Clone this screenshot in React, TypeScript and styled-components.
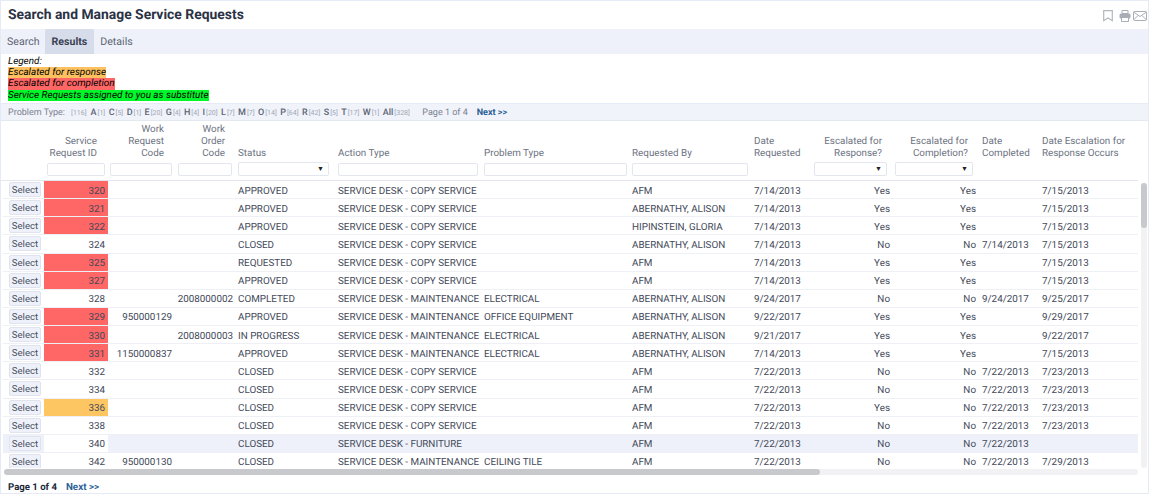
import React from "react";
import styled, { createGlobalStyle } from "styled-components";

const Global = createGlobalStyle`
  html, body { margin: 0; padding: 0; background: #fff; height: 496px; overflow: hidden; }
  body { font-family: Roboto, "Liberation Sans", sans-serif; font-size: 9.85px; color: #444a5a; text-rendering: geometricPrecision; }
  * { box-sizing: border-box; }
`;

const COLS = "1px 40px 64px 66px 62px 100px 146px 148px 122px 60px 81px 87px 60px 1fr";

const Page = styled.div`
  width: 1149px;
  height: 494px;
  border: 1px solid #e6eaf4;
  display: flex;
  flex-direction: column;
`;
const TitleBar = styled.div`
  flex: none;
  height: 28px;
  display: flex;
  align-items: center;
  justify-content: space-between;
  padding: 0 1px 0 7px;
`;
const Title = styled.h1`
  margin: 0;
  font-size: 13.9px;
  font-weight: 700;
  color: #2b3245;
`;
const Tools = styled.div`
  display: flex;
  align-items: center;
  gap: 2px;
  padding-top: 2px;
  & > svg:first-child {
    margin-right: 4px;
  }
`;
const Tabs = styled.div`
  flex: none;
  height: 25px;
  background: #eef1f9;
  display: flex;
`;
const Tab = styled.div<{ $active?: boolean }>`
  padding: ${(p) => (p.$active ? "0 7px" : "0 5px 0 6px")};
  line-height: 25px;
  font-size: 10.6px;
  border-radius: 2px 2px 0 0;
  background: ${(p) => (p.$active ? "#d6dcea" : "transparent")};
  font-weight: ${(p) => (p.$active ? 700 : 400)};
  color: ${(p) => (p.$active ? "#3a4152" : "#5c6373")};
`;
const Legend = styled.div`
  flex: none;
  height: 49px;
  padding: 2px 0 0 7px;
  display: flex;
  flex-direction: column;
  align-items: flex-start;
  font-style: italic;
  font-size: 9.9px;
  line-height: 11.2px;
  color: #000;
`;
const Mark = styled.span<{ $c?: string }>`
  background: ${(p) => p.$c || "transparent"};
`;
const FilterBar = styled.div`
  flex: none;
  height: 18px;
  background: #f0f3fa;
  border-top: 1px solid #e6eaf4;
  border-bottom: 1px solid #e4e8f1;
  display: flex;
  align-items: center;
  padding: 1px 0 0 7px;
  font-size: 9px;
  color: #7b8190;
  white-space: nowrap;
`;
const FilterLabel = styled.span`
  margin-right: 6px;
`;
const Letter = styled.span`
  margin-right: 3.45px;
  font-weight: 500;
  color: #5d6474;
  & > small {
    font-size: 7px;
    font-weight: 400;
    color: #a0a6b3;
    margin-left: 1px;
  }
`;
const Count = styled.small`
  font-size: 7px;
  color: #a0a6b3;
  margin-right: 4px;
`;
const PageInfo = styled.span`
  margin-left: 9px;
  margin-right: 9px;
`;
const NextLink = styled.a<{ $large?: boolean }>`
  color: #2b5f95;
  font-weight: 700;
  font-size: ${(p) => (p.$large ? "9.8px" : "9px")};
`;
const HeadRow = styled.div`
  flex: none;
  display: grid;
  grid-template-columns: ${COLS};
  height: 60px;
  padding-left: 2px;
  border-bottom: 1px solid #e3e6ee;
  width: 1137px;
  color: #6d7382;
  line-height: 12px;
`;
const Head = styled.div<{ $right?: boolean; $pr: number }>`
  display: flex;
  flex-direction: column;
  align-items: ${(p) => (p.$right ? "flex-end" : "flex-start")};
  text-align: ${(p) => (p.$right ? "right" : "left")};
  padding: 0 ${(p) => p.$pr}px 4px 2px;
  min-width: 0;
`;
const HeadLabel = styled.div`
  flex: 1;
  display: flex;
  align-items: flex-end;
  white-space: pre-line;
`;
const FieldBox = styled.div<{ $select?: boolean; $l: number; $r: number; $pr: number }>`
  margin: ${(p) => (p.$select ? 2 : 3)}px ${(p) => p.$r - p.$pr}px 0 ${(p) => p.$l - 2}px;
  align-self: stretch;
  flex: none;
  height: ${(p) => (p.$select ? 14 : 13)}px;
  width: auto;
  border: 1px solid #e3e6ee;
  border-radius: 2px;
  background: #fff;
  font-size: 7px;
  line-height: 12px;
  color: #222;
  text-align: right;
  padding-right: 4px;
`;
const Spacer = styled.div`
  flex: none;
  height: 13px;
  margin-top: 3px;
`;
const Scroller = styled.div`
  flex: none;
  position: relative;
  height: 294px;
  overflow: hidden;
`;
const RowsClip = styled.div`
  height: 287px;
  overflow: hidden;
`;
const Row = styled.div`
  display: grid;
  grid-template-columns: ${COLS};
  width: 1137px;
  height: 18.13px;
  padding-left: 2px;
  white-space: nowrap;
`;
const Cell = styled.div<{ $right?: number; $bg?: string }>`
  padding: 5.5px ${(p) => p.$right ?? 0}px 0 2px;
  line-height: 10px;
  text-align: ${(p) => (p.$right ? "right" : "left")};
  background: ${(p) => p.$bg || "transparent"};
  border-bottom: 1px solid #eef0f5;
  min-width: 0;
  height: 18.13px;
`;
const ButtonCell = styled.div<{ $bg?: string }>`
  background: ${(p) => p.$bg || "transparent"};
  border-bottom: 1px solid #eef0f5;
  height: 18.13px;
`;
const SelectBtn = styled.button`
  display: block;
  margin: 1px 0 0 5px;
  width: 32px;
  height: 15px;
  padding: 0;
  border: 1px solid #dfe3ee;
  border-radius: 2px;
  background: #eef1f9;
  color: #4a5162;
  font: 400 9.6px Roboto, sans-serif;
`;
const HScroll = styled.div`
  position: absolute;
  left: 3px;
  width: 1134px;
  top: 288px;
  height: 6px;
  background: #f2f2f4;
  border-radius: 3px;
`;
const HThumb = styled.div`
  width: 816px;
  height: 6px;
  border-radius: 3px;
  background: #c8c9cd;
`;
const VScroll = styled.div`
  position: absolute;
  left: 1140px;
  top: 2px;
  height: 285px;
  width: 6px;
  background: #f2f2f4;
  border-radius: 3px;
`;
const VThumb = styled.div`
  width: 6px;
  height: 45px;
  border-radius: 3px;
  background: #c8c9cd;
`;
const Footer = styled.div`
  flex: none;
  height: 18px;
  display: flex;
  align-items: center;
  padding: 6px 0 0 7px;
  font-size: 9.6px;
  font-weight: 700;
  color: #20283a;
  gap: 9px;
`;

type R = [string, string, string, string, string, string, string, string, string, string, string, string, string];

const COPY = "SERVICE DESK - COPY SERVICE";
const MAINT = "SERVICE DESK - MAINTENANCE";
const AB = "ABERNATHY, ALISON";

const rows: R[] = [
  ["320", "", "", "APPROVED", COPY, "", "AFM", "7/14/2013", "Yes", "Yes", "", "7/15/2013", "r"],
  ["321", "", "", "APPROVED", COPY, "", AB, "7/14/2013", "Yes", "Yes", "", "7/15/2013", "r"],
  ["322", "", "", "APPROVED", COPY, "", "HIPINSTEIN, GLORIA", "7/14/2013", "Yes", "Yes", "", "7/15/2013", "r"],
  ["324", "", "", "CLOSED", COPY, "", AB, "7/14/2013", "No", "No", "7/14/2013", "7/15/2013", ""],
  ["325", "", "", "REQUESTED", COPY, "", "AFM", "7/14/2013", "Yes", "Yes", "", "7/15/2013", "r"],
  ["327", "", "", "APPROVED", COPY, "", "AFM", "7/14/2013", "Yes", "Yes", "", "7/15/2013", "r"],
  ["328", "", "2008000002", "COMPLETED", MAINT, "ELECTRICAL", AB, "9/24/2017", "No", "No", "9/24/2017", "9/25/2017", ""],
  ["329", "950000129", "", "APPROVED", MAINT, "OFFICE EQUIPMENT", AB, "9/22/2017", "Yes", "Yes", "", "9/29/2017", "r"],
  ["330", "", "2008000003", "IN PROGRESS", MAINT, "ELECTRICAL", AB, "9/21/2017", "Yes", "Yes", "", "9/22/2017", "r"],
  ["331", "1150000837", "", "APPROVED", MAINT, "ELECTRICAL", AB, "7/14/2013", "Yes", "Yes", "", "7/15/2013", "r"],
  ["332", "", "", "CLOSED", COPY, "", "AFM", "7/22/2013", "No", "No", "7/22/2013", "7/23/2013", ""],
  ["334", "", "", "CLOSED", COPY, "", "AFM", "7/22/2013", "No", "No", "7/22/2013", "7/23/2013", ""],
  ["336", "", "", "CLOSED", COPY, "", "AFM", "7/22/2013", "Yes", "No", "7/22/2013", "7/23/2013", "o"],
  ["338", "", "", "CLOSED", COPY, "", "AFM", "7/22/2013", "No", "No", "7/22/2013", "7/23/2013", ""],
  ["340", "", "", "CLOSED", "SERVICE DESK - FURNITURE", "", "AFM", "7/22/2013", "No", "No", "7/22/2013", "", "h"],
  ["342", "950000130", "", "CLOSED", MAINT, "CEILING TILE", "AFM", "7/22/2013", "No", "No", "7/22/2013", "7/29/2013", ""],
];

const letters: [string, string][] = [
  ["A", "1"], ["C", "5"], ["D", "1"], ["E", "20"], ["G", "4"], ["H", "4"], ["I", "20"], ["L", "7"],
  ["M", "7"], ["O", "14"], ["P", "64"], ["R", "42"], ["S", "5"], ["T", "17"], ["W", "1"], ["All", "328"],
];

const heads: { t: string; right?: boolean; field?: "input" | "select"; l?: number; r?: number; pr: number }[] = [
  { t: "Service\nRequest ID", right: true, field: "input", l: 3, r: 3, pr: 11 },
  { t: "Work\nRequest\nCode", right: true, field: "input", l: 2, r: 2, pr: 10 },
  { t: "Work\nOrder\nCode", right: true, field: "input", l: 4, r: 4, pr: 11 },
  { t: "Status", field: "select", l: 2, r: 7, pr: 2 },
  { t: "Action Type", field: "input", l: 2, r: 4, pr: 2 },
  { t: "Problem Type", field: "input", l: 2, r: 3, pr: 2 },
  { t: "Requested By", field: "input", l: 2, r: 4, pr: 2 },
  { t: "Date\nRequested", pr: 0 },
  { t: "Escalated for\nResponse?", right: true, field: "select", l: 2, r: 6, pr: 11 },
  { t: "Escalated for\nCompletion?", right: true, field: "select", l: 2, r: 7, pr: 12 },
  { t: "Date\nCompleted", pr: 0 },
  { t: "Date Escalation for\nResponse Occurs", pr: 0 },
];

export default function App() {
  return (
    <Page>
      <Global />
      <TitleBar>
        <Title>Search and Manage Service Requests</Title>
        <Tools>
          <svg width="10" height="12" viewBox="0 0 10 12" fill="none" stroke="#b4b7bf" strokeWidth="1.2">
            <path d="M.7.7h8.6v10L5 8 .7 10.7z" />
          </svg>
          <svg width="12" height="12" viewBox="0 0 12 12">
            <path d="M3 .5h6v3H3z" fill="none" stroke="#a9adb6" />
            <rect x="0.5" y="3.5" width="11" height="5" rx="1.5" fill="#a9adb6" />
            <path d="M2.5 7.5h7v4h-7z" fill="#fff" stroke="#a9adb6" />
          </svg>
          <svg width="14" height="10" viewBox="0 0 14 10" fill="none" stroke="#a9adb6">
            <rect x=".5" y=".5" width="13" height="9" rx="1" />
            <path d="M.5 1 7 5.5 13.5 1M.5 9 5 4.5M13.5 9 9 4.5" />
          </svg>
        </Tools>
      </TitleBar>
      <Tabs>
        <Tab>Search</Tab>
        <Tab $active>Results</Tab>
        <Tab>Details</Tab>
      </Tabs>
      <Legend>
        <Mark>Legend:</Mark>
        <Mark $c="#fdc15f">Escalated for response</Mark>
        <Mark $c="#ff6666">Escalated for completion</Mark>
        <Mark $c="#00f72a">Service Requests assigned to you as substitute</Mark>
      </Legend>
      <FilterBar>
        <FilterLabel>Problem Type:</FilterLabel>
        <Count>[116]</Count>
        {letters.map(([l, n]) => (
          <Letter key={l}>
            {l}
            <small>[{n}]</small>
          </Letter>
        ))}
        <PageInfo>Page 1 of 4</PageInfo>
        <NextLink>Next &gt;&gt;</NextLink>
      </FilterBar>
      <HeadRow>
        <div />
        <div />
        {heads.map((h) => (
          <Head key={h.t} $right={h.right} $pr={h.pr}>
            <HeadLabel>{h.t}</HeadLabel>
            {h.field === "input" && <FieldBox $l={h.l!} $r={h.r!} $pr={h.pr} />}
            {h.field === "select" && (
              <FieldBox $select $l={h.l!} $r={h.r!} $pr={h.pr}>▼</FieldBox>
            )}
            {!h.field && <Spacer />}
          </Head>
        ))}
      </HeadRow>
      <Scroller>
        <RowsClip>
          {rows.map((r) => {
            const flag = r[12];
            const hl = flag === "h" ? "#eef1f9" : undefined;
            const idBg = flag === "r" ? "#ff6666" : flag === "o" ? "#fdc662" : undefined;
            return (
              <Row key={r[0]}>
                <ButtonCell $bg={hl} />
                <ButtonCell $bg={hl}>
                  <SelectBtn>Select</SelectBtn>
                </ButtonCell>
                <Cell $right={3} $bg={idBg}>{r[0]}</Cell>
                <Cell $right={2} $bg={hl}>{r[1]}</Cell>
                <Cell $right={3} $bg={hl}>{r[2]}</Cell>
                <Cell $bg={hl}>{r[3]}</Cell>
                <Cell $bg={hl}>{r[4]}</Cell>
                <Cell $bg={hl}>{r[5]}</Cell>
                <Cell $bg={hl}>{r[6]}</Cell>
                <Cell $bg={hl}>{r[7]}</Cell>
                <Cell $right={3} $bg={hl}>{r[8]}</Cell>
                <Cell $right={4} $bg={hl}>{r[9]}</Cell>
                <Cell $bg={hl}>{r[10]}</Cell>
                <Cell $bg={hl}>{r[11]}</Cell>
              </Row>
            );
          })}
        </RowsClip>
        <HScroll><HThumb /></HScroll>
        <VScroll><VThumb /></VScroll>
      </Scroller>
      <Footer>
        <span>Page 1 of 4</span>
        <NextLink $large>Next &gt;&gt;</NextLink>
      </Footer>
    </Page>
  );
}
